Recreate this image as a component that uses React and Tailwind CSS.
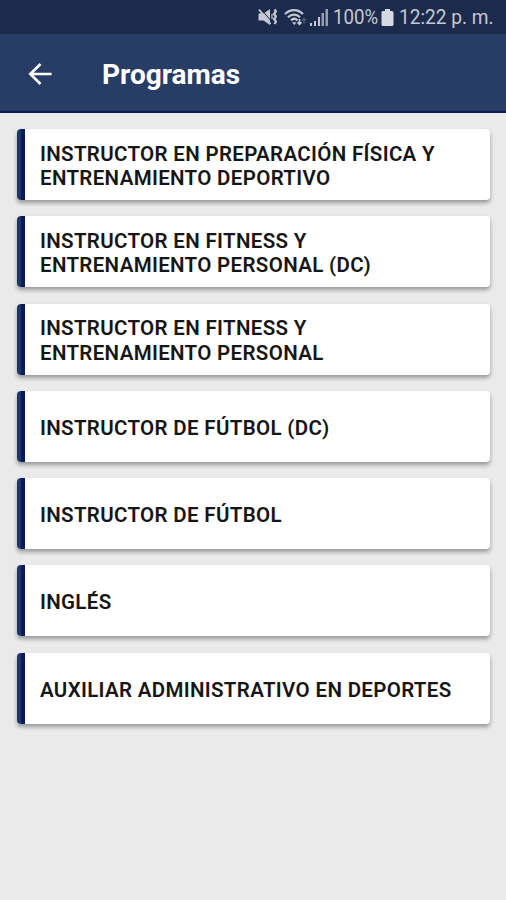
const programs = [
  "INSTRUCTOR EN PREPARACIÓN FÍSICA Y ENTRENAMIENTO DEPORTIVO",
  "INSTRUCTOR EN FITNESS Y ENTRENAMIENTO PERSONAL (DC)",
  "INSTRUCTOR EN FITNESS Y ENTRENAMIENTO PERSONAL",
  "INSTRUCTOR DE FÚTBOL (DC)",
  "INSTRUCTOR DE FÚTBOL",
  "INGLÉS",
  "AUXILIAR ADMINISTRATIVO EN DEPORTES",
];

function MuteIcon() {
  return (
    <svg width="20" height="18" viewBox="0 0 20 18" fill="none" stroke="#c3c8d3">
      <path d="M1.500 5.500h5l6.500-4.500v16l-6.500-4.500h-5z" fill="#c3c8d3" stroke="none" />
      <path d="M4 1l10.500 12.500" stroke="#1c2b4b" strokeWidth="1" />
      <path d="M2 1.500l11.500 14.500" strokeWidth="2" />
      <path d="M17.500 1.500l1.500 2-2 2.500 2 2.500-2 2.500 2 2.500-1.500 2.500" strokeWidth="2.200" />
      <path d="M15 6v5" strokeWidth="1.200" />
    </svg>
  );
}

function WifiIcon() {
  return (
    <svg width="23" height="18" viewBox="0 0 23 18" fill="none" stroke="#c3c8d3" strokeWidth="2.200">
      <path d="M1 6c5-5.300 13-5.300 18 0" />
      <path d="M4 9.300c3.500-3.600 8.500-3.600 12 0" />
      <path d="M7 12.400c2-2 4.500-2 6.500 0" />
      <path d="M8 14.200h4.500l-2.200 2.800z" fill="#c3c8d3" stroke="none" />
      <path d="M15.500 11v5M13.500 14.300l2 2 2-2" strokeWidth="1.700" />
      <path d="M20 15.500v-5M18.300 12.500l1.700-2 1.700 2" stroke="#53617d" strokeWidth="1.300" />
    </svg>
  );
}

function SignalIcon() {
  return (
    <svg width="18" height="17" viewBox="0 0 18 17" fill="#c3c8d3">
      <path d="M0 14h2v3H0zM4 12h2v5H4zM8 8h2v9H8z" />
      <path d="M11.500 4h2.500v13h-2.500zM15.500 0h2.500v17h-2.500z" fill="#949eb2" />
    </svg>
  );
}

function BatteryIcon() {
  return (
    <svg width="13" height="17" viewBox="0 0 13 17" fill="#d5d9e1">
      <path d="M4 0h5v2h2q1.500 0 1.500 1.500v12q0 1.500-1.500 1.500H2Q.5 17 .5 15.500v-12Q.5 2 2 2h2z" />
    </svg>
  );
}

function StatusBar() {
  return (
    <div className="flex h-[34px] items-center bg-[#1c2b4b] pl-[257px] text-[#c3c8d3]">
      <MuteIcon />
      <div className="ml-[7px]">
        <WifiIcon />
      </div>
      <div className="ml-[3px]">
        <SignalIcon />
      </div>
      <span className="ml-[5px] w-[46px] whitespace-nowrap pt-px text-[21px] leading-none">
        <span className="inline-block origin-left scale-x-[0.89]">100%</span>
      </span>
      <div className="ml-[2px]">
        <BatteryIcon />
      </div>
      <span className="ml-[5px] whitespace-nowrap pt-px text-[21px] leading-none">
        <span className="inline-block origin-left scale-x-[0.91]">12:22 p. m.</span>
      </span>
    </div>
  );
}

function Header() {
  return (
    <header className="flex h-[79px] items-center border-b-2 border-[#0d1b55] bg-[#283d66] pt-0.5 pl-7 text-white">
      <svg width="24" height="24" viewBox="0 0 24 24" fill="none" stroke="currentColor" strokeWidth="2.600">
        <path d="M23.500 12H2M12.500 2L2.300 12l10.200 10" />
      </svg>
      <h1 className="ml-[50px] pt-[3px] text-[28px] font-bold leading-none">Programas</h1>
    </header>
  );
}

function ProgramCard({ name }) {
  return (
    <li className="flex h-[71px] overflow-hidden rounded-[4px] bg-white shadow-[0_3px_4px_rgba(0,0,0,0.35)]">
      <div className="w-2 shrink-0 border-r-4 border-[#0a1a5c] bg-[#1e3769]" />
      <p className="flex items-center pt-[3px] pr-7 pl-[15px] text-[20.500px] font-semibold leading-[24.500px] tracking-[0.33px] text-[#161616]">
        {name}
      </p>
    </li>
  );
}

export default function App() {
  return (
    <div className="flex h-[900px] w-[506px] flex-col overflow-hidden bg-[#eaeaea] font-[Roboto,sans-serif]">
      <StatusBar />
      <Header />
      <ul className="flex flex-col gap-[16.300px] pt-4 pr-4 pl-[17px]">
        {programs.map((name) => (
          <ProgramCard key={name} name={name} />
        ))}
      </ul>
    </div>
  );
}
